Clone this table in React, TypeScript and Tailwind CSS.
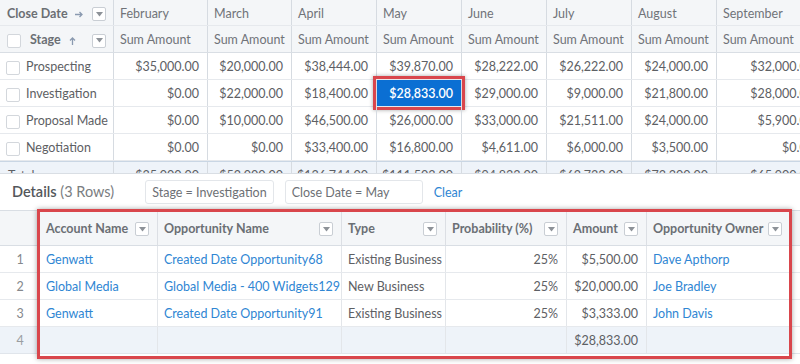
import React from 'react'

// Matrice du rapport + détails filtrés

const Caret = () => (
  <span className="flex h-[14px] w-[14px] shrink-0 items-center justify-center rounded-[2px] border border-[#c9ced4] bg-white">
    <svg width="7" height="5" viewBox="0 0 7 5">
      <path d="M0 0h7L3.5 4.5z" fill="#8d9298" />
    </svg>
  </span>
)

const Check = () => (
  <span className="h-[14px] w-[14px] shrink-0 rounded-[2px] border border-[#d3d7dc] bg-white" />
)

const months = ['February', 'March', 'April', 'May', 'June', 'July', 'August', 'September']
const colW = ['w-[94px]', 'w-[84px]', 'w-[85px]', 'w-[85px]', 'w-[85px]', 'w-[85px]', 'w-[85px]', 'w-[106px]']

const stages = [
  { name: 'Prospecting', values: ['$35,000.00', '$20,000.00', '$38,444.00', '$39,870.00', '$28,222.00', '$26,222.00', '$24,000.00', '$32,000.00'] },
  { name: 'Investigation', values: ['$0.00', '$22,000.00', '$18,400.00', '$28,833.00', '$29,000.00', '$9,000.00', '$21,800.00', '$28,000.00'] },
  { name: 'Proposal Made', values: ['$0.00', '$10,000.00', '$46,500.00', '$26,000.00', '$33,000.00', '$21,511.00', '$24,000.00', '$5,900.00'] },
  { name: 'Negotiation', values: ['$0.00', '$0.00', '$33,400.00', '$16,800.00', '$4,611.00', '$6,000.00', '$3,500.00', '$0.00'] },
]
const totals = ['$35,000.00', '$52,000.00', '$136,744.00', '$111,503.00', '$94,833.00', '$62,733.00', '$73,300.00', '$65,900.00']

const detailCols = [
  { label: 'Account Name', w: 'w-[117px]', right: false },
  { label: 'Opportunity Name', w: 'w-[184px]', right: false },
  { label: 'Type', w: 'w-[104px]', right: false },
  { label: 'Probability (%)', w: 'w-[121px]', right: true },
  { label: 'Amount', w: 'w-[80px]', right: true },
  { label: 'Opportunity Owner', w: 'w-[144px]', right: false },
]

const details = [
  { n: 1, cells: ['Genwatt', 'Created Date Opportunity68', 'Existing Business', '25%', '$5,500.00', 'Dave Apthorp'] },
  { n: 2, cells: ['Global Media', 'Global Media - 400 Widgets129', 'New Business', '25%', '$20,000.00', 'Joe Bradley'] },
  { n: 3, cells: ['Genwatt', 'Created Date Opportunity91', 'Existing Business', '25%', '$3,333.00', 'John Davis'] },
]
const linkCols = [0, 1, 5]

export default function App() {
  return (
    <div className="h-[364px] w-[800px] overflow-hidden bg-white font-['Lato',sans-serif] text-[12.5px] text-[#5d6064]">
      {/* Matrice */}
      <div className="h-[174px] overflow-hidden border-b border-[#d9dee4]">
        <div className="w-[900px]">
          <div className="flex h-[26px] border-b border-[#e6e9ed] bg-[#f4f6f8]">
            <div className="flex w-[113px] shrink-0 items-center pl-[7px] pr-[7px] pt-[3px]">
              <span className="font-bold text-[#6b6f74]">Close Date</span>
              <svg className="ml-[7px]" width="9" height="7" viewBox="0 0 9 7">
                <path d="M0 3.5h7M4.5 1l2.5 2.5L4.5 6" stroke="#8a9ab0" strokeWidth="1.3" fill="none" />
              </svg>
              <span className="ml-auto"><Caret /></span>
            </div>
            {months.map((m, i) => (
              <div key={m} className={`${colW[i]} flex shrink-0 items-center border-l border-[#d6dbe1] pl-1.5 pt-[3px] text-[#707378]`}>
                {m}
              </div>
            ))}
          </div>
          <div className="flex h-[27px] border-b border-[#d9dee4] bg-[#f4f6f8]">
            <div className="flex w-[113px] shrink-0 items-center pl-[7px] pr-[7px] pt-[3px]">
              <Check />
              <span className="ml-[9px] font-bold text-[#6b6f74]">Stage</span>
              <svg className="ml-[8px]" width="7" height="9" viewBox="0 0 7 9">
                <path d="M3.5 9V2M1 4.5l2.5-2.5L6 4.5" stroke="#8a9ab0" strokeWidth="1.3" fill="none" />
              </svg>
              <span className="ml-auto"><Caret /></span>
            </div>
            {months.map((m, i) => (
              <div key={m} className={`${colW[i]} flex shrink-0 items-center border-l border-[#d6dbe1] pl-1.5 pt-[3px] text-[#707378]`}>
                Sum Amount
              </div>
            ))}
          </div>
          {stages.map((s, r) => (
            <div key={s.name} className="flex h-[27px] border-b border-[#e6e9ed]">
              <div className="flex w-[113px] shrink-0 items-center pl-[6px] pt-[3px]">
                <Check />
                <span className="ml-[6px]">{s.name}</span>
              </div>
              {s.values.map((v, i) => {
                const hit = r === 1 && i === 3
                return (
                  <div
                    key={i}
                    className={`${colW[i]} relative flex shrink-0 items-center justify-end border-l border-[#d6dbe1] pr-2 pt-[3px] ${hit ? 'bg-[#0b6fd3] font-semibold text-white' : ''}`}
                  >
                    {v}
                    {hit && (
                      <span className="pointer-events-none absolute -inset-[4px] border-[3px] border-[#d9464c] shadow-[0_0_4px_rgba(0,0,0,0.35)]" />
                    )}
                  </div>
                )
              })}
            </div>
          ))}
          <div className="flex h-[27px] border-t border-[#c9d6e4] bg-[#eef3f9]">
            <div className="flex w-[113px] shrink-0 items-center pl-[8px] pt-[3px]">Total</div>
            {totals.map((v, i) => (
              <div key={i} className={`${colW[i]} flex shrink-0 items-center justify-end border-l border-[#d6dbe1] pr-2 pt-[3px]`}>
                {v}
              </div>
            ))}
          </div>
        </div>
      </div>

      {/* Barre de détails */}
      <div className="flex h-[36px] items-center pl-3">
        <span className="text-[14.5px] text-[#54575b]">
          <span className="font-semibold">Details</span> <span className="text-[#7a7d81]">(3 Rows)</span>
        </span>
        <span className="ml-[31px] flex h-[24px] items-center rounded-[3px] border border-[#e3e6ea] px-1.5 pt-[2px] text-[#6d7075]">
          Stage = Investigation
        </span>
        <span className="ml-[11px] flex h-[24px] w-[138px] items-center rounded-[3px] border border-[#e3e6ea] px-1.5 pt-[2px] text-[#6d7075]">
          Close Date = May
        </span>
        <span className="ml-[11px] pt-[2px] text-[#2f86d3]">Clear</span>
      </div>

      {/* Table de détails */}
      <div className="relative">
        <div className="flex h-[36px] border-y border-[#d9dee4] bg-[#f4f6f8]">
          <div className="w-[40px] shrink-0" />
          {detailCols.map((c, i) => (
            <div
              key={c.label}
              className={`${c.w} flex shrink-0 items-center pl-1.5 pr-2 pt-[2px] font-bold text-[#6b6f74] ${i > 0 ? 'border-l border-[#dcdfe4]' : ''}`}
            >
              <span className="whitespace-nowrap">{c.label}</span>
              <span className="ml-auto"><Caret /></span>
            </div>
          ))}
          <div className="flex-1 border-l border-[#dcdfe4]" />
        </div>
        {details.map((d) => (
          <div key={d.n} className="flex h-[27px] border-b border-[#e6e9ed]">
            <div className="flex w-[40px] shrink-0 items-center justify-center pt-[3px] text-[#85888c]">{d.n}</div>
            {detailCols.map((c, i) => (
              <div
                key={c.label}
                className={`${c.w} flex shrink-0 items-center whitespace-nowrap pt-[3px] ${c.right ? 'justify-end pr-2' : 'pl-1.5'} ${i > 0 ? 'border-l border-[#e3e6ea]' : ''} ${linkCols.includes(i) ? 'text-[#2f86d3]' : ''}`}
              >
                {d.cells[i]}
              </div>
            ))}
            <div className="flex-1 border-l border-[#e3e6ea]" />
          </div>
        ))}
        <div className="flex h-[27px] border-b border-[#e0e5eb] bg-[#eef3f9]">
          <div className="flex w-[40px] shrink-0 items-center justify-center pt-[3px] text-[#9a9da1]">4</div>
          {detailCols.map((c, i) => (
            <div
              key={c.label}
              className={`${c.w} flex shrink-0 items-center pt-[3px] ${c.right ? 'justify-end pr-2' : 'pl-1.5'} ${i > 0 ? 'border-l border-[#e3e6ea]' : ''}`}
            >
              {i === 4 ? '$28,833.00' : ''}
            </div>
          ))}
          <div className="flex-1 bg-white" />
        </div>
        <span className="pointer-events-none absolute left-[37px] top-[-1px] h-[150px] w-[755px] border-[3px] border-[#d9464c] shadow-[0_0_5px_rgba(0,0,0,0.35)]" />
      </div>
    </div>
  )
}
